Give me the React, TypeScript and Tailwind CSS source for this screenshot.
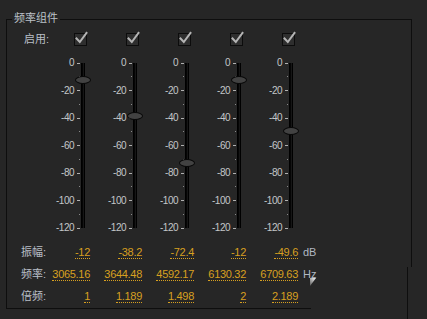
import React from 'react'

interface Band {
  amp: string;
  freq: string;
  ratio: string;
  db: number;
}

const bands: Band[] = [
  { amp: '-12', freq: '3065.16', ratio: '1', db: -12 },
  { amp: '-38.2', freq: '3644.48', ratio: '1.189', db: -38.2 },
  { amp: '-72.4', freq: '4592.17', ratio: '1.498', db: -72.4 },
  { amp: '-12', freq: '6130.32', ratio: '2', db: -12 },
  { amp: '-49.6', freq: '6709.63', ratio: '2.189', db: -49.6 },
]

const scale = ['0', '-20', '-40', '-60', '-80', '-100', '-120']
const TRACK_H = 165

const CheckBox = () => (
  <div className="absolute left-[36px] top-0 w-[13px] h-[13px] border border-[#0c0c0c] bg-[#2e2e2e]">
    <svg width="15" height="15" viewBox="0 0 15 15" className="absolute left-[-1px] top-[-3px]">
      <path d="M2.5 7.5 L5.8 11 L12.5 2" fill="none" stroke="#b4b4b4" strokeWidth="2" strokeLinecap="square" />
    </svg>
  </div>
)

const SliderCol = ({ db }: { db: number }) => {
  const y = (-db / 120) * TRACK_H
  return (
    <div className="relative w-[52px] h-full">
      {/* scale labels + ticks */}
      <div className="absolute right-[10px] top-[-6px] h-[177px] flex flex-col justify-between items-end">
        {scale.map((s) => (
          <div key={s} className="flex items-center h-[12px] leading-[12px]">
            <span className="text-[10px] tracking-[-0.5px] text-[#c4c6c8]">{s}</span>
            <span className="ml-[3px] w-[3px] h-px bg-[#b0b0b0]"></span>
          </div>
        ))}
      </div>
      {/* minor dots */}
      <div className="absolute left-[41px] top-[13px] h-[138.5px] flex flex-col justify-between">
        {[0, 1, 2, 3, 4, 5].map((i) => (
          <div key={i} className="w-px h-px bg-[#8a8a8a]"></div>
        ))}
      </div>
      <div className="absolute left-[43px] top-0 w-[4px] h-full bg-[#050505] border-x border-black">
        <div className="mx-auto w-px h-full bg-[#161616]"></div>
      </div>
      <div
        className="absolute left-[37px] w-[16px] h-[8px] rounded-[50%] border border-[#080808] bg-[#424242]"
        style={{ top: y - 4 }}
      ></div>
    </div>
  )
}

const ValueRow = ({ label, values, unit }: { label: string, values: string[], unit?: string }) => (
  <div className="flex items-center h-[22px]">
    <div className="w-[31px] pl-[14px] whitespace-nowrap text-[11px] text-[#b8bec6]">{label}</div>
    {values.map((v, i) => (
      <div key={i} className="w-[52px] flex justify-end">
        <span className="inline-block leading-[12px] border-b border-dotted border-[#d8a020] text-[11px] tracking-[-0.3px] text-[#d8a020]">{v}</span>
      </div>
    ))}
    {unit && <span className="ml-[5px] text-[11px] text-[#b0b8c2]">{unit}</span>}
  </div>
)

export default function App() {
  return (
    <div className="relative w-[427px] h-[319px] overflow-hidden bg-[#262626] pt-[19px] pl-[6px] font-['Liberation_Sans','Noto_Sans_CJK_SC',sans-serif]">
      {/* neighbouring panel edge at bottom right */}
      <div className="absolute left-[407px] top-[267px] bottom-0 w-px bg-[#0e0e0e]"></div>
      <svg width="6" height="8" viewBox="0 0 6 8" className="absolute left-[310px] top-[278px]">
        <defs>
          <linearGradient id="g" x1="1" y1="0" x2="0" y2="1">
            <stop offset="0" stopColor="#ffffff" />
            <stop offset="1" stopColor="#555555" />
          </linearGradient>
        </defs>
        <polygon points="0,0 6,0 0,8" fill="url(#g)" />
      </svg>

      <div className="relative w-[406px] h-[290px] border-l border-t border-[#0e0e0e]">
        <div className="absolute right-0 top-0 w-px h-[247px] bg-[#0e0e0e]"></div>
        <div className="absolute left-0 bottom-0 w-[304px] h-px bg-[#0e0e0e]"></div>
        <div className="absolute top-[-9px] left-[5px] px-[2px] bg-[#262626] text-[11px] leading-[14px] text-[#bcc2c8]">频率组件</div>

        {/* enable row */}
        <div className="flex items-center h-[13px] mt-[13px]">
          <div className="w-[31px] pl-[17px] whitespace-nowrap text-[11px] text-[#b8bec6]">启用:</div>
          {bands.map((b, i) => (
            <div key={i} className="relative w-[52px] h-[13px]">
              <CheckBox />
            </div>
          ))}
        </div>

        {/* sliders */}
        <div className="flex mt-[17px] h-[165px]">
          <div className="w-[31px]"></div>
          {bands.map((b, i) => (
            <SliderCol key={i} db={b.db} />
          ))}
        </div>

        <div className="mt-[13px]">
          <ValueRow label="振幅:" values={bands.map((b) => b.amp)} unit="dB" />
          <ValueRow label="频率:" values={bands.map((b) => b.freq)} unit="Hz" />
          <ValueRow label="倍频:" values={bands.map((b) => b.ratio)} />
        </div>
      </div>
    </div>
  )
}
